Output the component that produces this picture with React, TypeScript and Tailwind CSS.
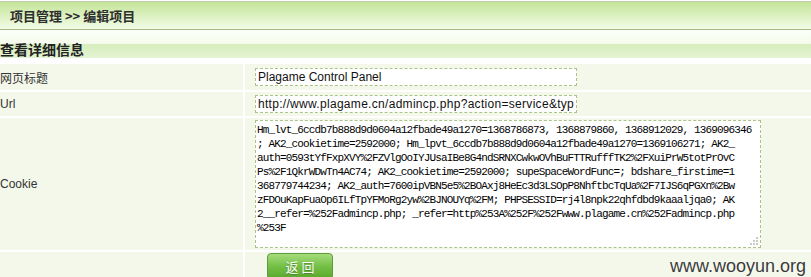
const cookieLines = [
  "Hm_lvt_6ccdb7b888d9d0604a12fbade49a1270=1368786873, 1368879860, 1368912029, 1369096346",
  "; AK2_cookietime=2592000; Hm_lpvt_6ccdb7b888d9d0604a12fbade49a1270=1369106271; AK2_",
  "auth=0593tYfFxpXVY%2FZVlgOoIYJUsaIBe8G4ndSRNXCwkwOVhBuFTTRufffTK2%2FXuiPrW5totPrOvC",
  "Ps%2F1QkrWDwTn4AC74; AK2_cookietime=2592000; supeSpaceWordFunc=; bdshare_firstime=1",
  "368779744234; AK2_auth=7600ipVBN5e5%2BOAxj8HeEc3d3LSOpP8NhftbcTqUa%2F7IJS6qPGXn%2Bw",
  "zFDOuKapFuaOp6ILfTpYFMoRg2yw%2BJNOUYq%2FM; PHPSESSID=rj4l8npk22qhfdbd9kaaaljqa0; AK",
  "2__refer=%252Fadmincp.php; _refer=http%253A%252F%252Fwww.plagame.cn%252Fadmincp.php",
  "%253F",
];

const ResizeGrip = () => (
  <svg width="10" height="10" viewBox="0 0 10 10" className="absolute bottom-[1px] right-[1px]">
    {[
      [8, 2],
      [8, 5],
      [5, 5],
      [8, 8],
      [5, 8],
      [2, 8],
    ].map(([x, y]) => (
      <rect key={`${x}-${y}`} x={x - 1} y={y - 1} width="2" height="2" fill="#c8cdc0" />
    ))}
  </svg>
);

export default function App() {
  return (
    <div className="relative h-[277px] w-[811px] overflow-hidden bg-white font-['Liberation_Sans','Noto_Sans_CJK_SC',sans-serif] text-[12px] text-[#333]">
      {/* top breadcrumb bar */}
      <div className="mt-px h-px bg-[#c2cab4]" />
      <div className="flex h-[28px] items-center border-b border-[#a3ba85] bg-gradient-to-b from-[#c4e498] to-[#f3fce6] pl-[10px] font-['Noto_Sans_CJK_SC',sans-serif] text-[13px] font-bold text-[#2e2e2e]">
        项目管理 &gt;&gt; 编辑项目
      </div>

      {/* section title */}
      <div className="flex h-[28px] items-center bg-[linear-gradient(to_bottom,#fcfff8_0%,#f5fbec_48%,#d6eebd_52%,#e4f4d3_100%)] pt-[10px] font-['Noto_Sans_CJK_SC',sans-serif] text-[14px] font-bold leading-[18px] text-[#222]">
        <span>查看详细信息</span>
      </div>

      {/* form table */}
      <div className="mt-[6px] grid grid-cols-[243px_1fr] grid-rows-[26px_24px_132px_30px] gap-[2px]">
        <div className="flex items-center bg-[#f3f8ea] pt-[2px] font-['Noto_Sans_CJK_SC',sans-serif] text-[12px]">
          <span>网页标题</span>
        </div>
        <div className="flex items-center bg-[#f3f8ea] pl-[10px]">
          <input
            readOnly
            defaultValue="Plagame Control Panel"
            className="h-[18px] w-[322px] border border-dashed border-[#abc388] bg-white px-[2px] text-[12px] text-[#111] outline-none"
          />
        </div>

        <div className="flex items-center bg-[#f3f8ea]">Url</div>
        <div className="flex items-center bg-[#f3f8ea] pl-[10px]">
          <input
            readOnly
            defaultValue="http://www.plagame.cn/admincp.php?action=service&type=list"
            className="h-[18px] w-[322px] border border-dashed border-[#abc388] bg-white px-[2px] text-[12px] tracking-[0.3px] text-[#111] outline-none"
          />
        </div>

        <div className="flex items-center bg-[#f3f8ea]">Cookie</div>
        <div className="bg-[#f3f8ea] pt-[2px] pl-[10px]">
          <div className="relative h-[128px] w-[506px] border border-dashed border-[#abc388] bg-white pt-[2px] pl-[1px] font-['Liberation_Mono',monospace] text-[11px] leading-[14px] tracking-[-0.85px] text-black">
            {cookieLines.map((line, i) => (
              <div key={i} className="whitespace-pre">
                {line}
              </div>
            ))}
            <ResizeGrip />
          </div>
        </div>

        <div className="bg-[#f3f8ea]" />
        <div className="bg-[#f3f8ea] pt-px pl-[22px]">
          <button className="h-[27px] w-[66px] rounded-[4px] border border-[#5f9c3a] bg-gradient-to-b from-[#a6dc7c] via-[#74bf45] to-[#57a82b] font-['Noto_Sans_CJK_SC',sans-serif] text-[13px] text-white [text-shadow:0_1px_1px_rgba(40,90,20,0.5)]">
            返 回
          </button>
        </div>
      </div>

      {/* watermark */}
      <div className="absolute right-[5px] bottom-[1px] font-['Liberation_Sans',sans-serif] text-[18px] leading-[20px] text-[#3a3a3a] [text-shadow:0_0_2px_#ffffff]">
        www.wooyun.org
      </div>
    </div>
  );
}
